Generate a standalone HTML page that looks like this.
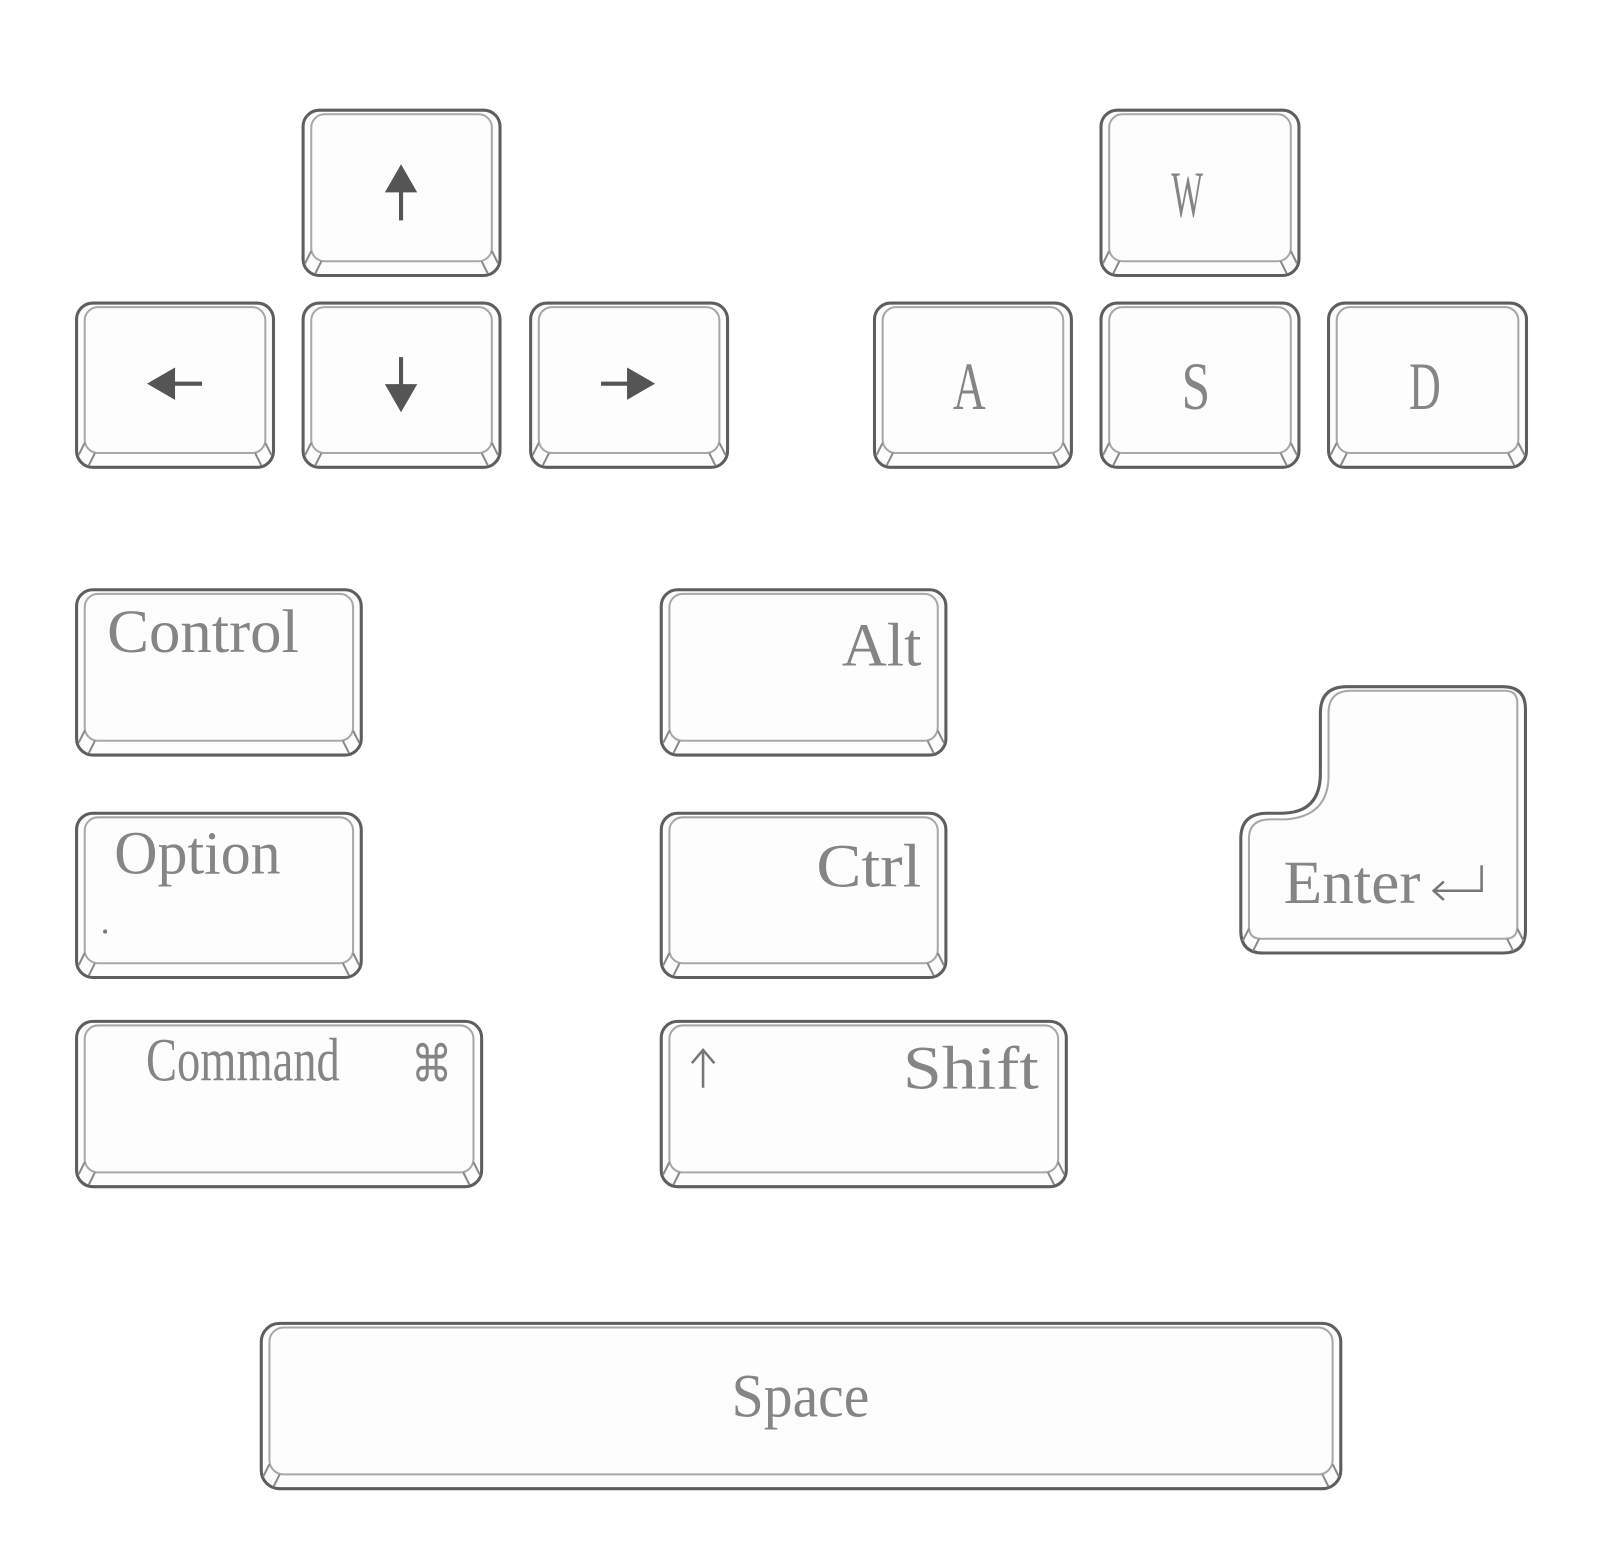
<!DOCTYPE html>
<html><head><meta charset="utf-8"><style>
html,body{margin:0;padding:0;background:#fff;}
svg{display:block}
.o{fill:#fdfdfd;stroke:#5e5e5e;stroke-width:3}
.i{fill:none;stroke:#a8a8a8;stroke-width:2}
.b{fill:none;stroke:#8a8a8a;stroke-width:2}
text{font-family:"Liberation Serif",serif;fill:#858585}
.a{fill:#555;stroke:#555}
</style></head><body>
<svg width="1600" height="1554" viewBox="0 0 1568 1523">
<rect class="o" x="297" y="108" width="193" height="162" rx="16"/><rect class="i" x="305" y="112" width="177" height="144" rx="13"/>
<path class="b" d="M305 246 L299 258 M315 256 L309 268 M482 246 L488 258 M472 256 L478 268"/>
<rect class="o" x="75" y="297" width="193" height="161" rx="16"/><rect class="i" x="83" y="301" width="177" height="143" rx="13"/>
<path class="b" d="M83 434 L77 446 M93 444 L87 456 M260 434 L266 446 M250 444 L256 456"/>
<rect class="o" x="297" y="297" width="193" height="161" rx="16"/><rect class="i" x="305" y="301" width="177" height="143" rx="13"/>
<path class="b" d="M305 434 L299 446 M315 444 L309 456 M482 434 L488 446 M472 444 L478 456"/>
<rect class="o" x="520" y="297" width="193" height="161" rx="16"/><rect class="i" x="528" y="301" width="177" height="143" rx="13"/>
<path class="b" d="M528 434 L522 446 M538 444 L532 456 M705 434 L711 446 M695 444 L701 456"/>
<rect class="o" x="1079" y="108" width="194" height="162" rx="16"/><rect class="i" x="1087" y="112" width="178" height="144" rx="13"/>
<path class="b" d="M1087 246 L1081 258 M1097 256 L1091 268 M1265 246 L1271 258 M1255 256 L1261 268"/>
<rect class="o" x="857" y="297" width="193" height="161" rx="16"/><rect class="i" x="865" y="301" width="177" height="143" rx="13"/>
<path class="b" d="M865 434 L859 446 M875 444 L869 456 M1042 434 L1048 446 M1032 444 L1038 456"/>
<rect class="o" x="1079" y="297" width="194" height="161" rx="16"/><rect class="i" x="1087" y="301" width="178" height="143" rx="13"/>
<path class="b" d="M1087 434 L1081 446 M1097 444 L1091 456 M1265 434 L1271 446 M1255 444 L1261 456"/>
<rect class="o" x="1302" y="297" width="194" height="161" rx="16"/><rect class="i" x="1310" y="301" width="178" height="143" rx="13"/>
<path class="b" d="M1310 434 L1304 446 M1320 444 L1314 456 M1488 434 L1494 446 M1478 444 L1484 456"/>
<rect class="o" x="75" y="578" width="279" height="162" rx="16"/><rect class="i" x="83" y="582" width="263" height="144" rx="13"/>
<path class="b" d="M83 716 L77 728 M93 726 L87 738 M346 716 L352 728 M336 726 L342 738"/>
<rect class="o" x="648" y="578" width="279" height="162" rx="16"/><rect class="i" x="656" y="582" width="263" height="144" rx="13"/>
<path class="b" d="M656 716 L650 728 M666 726 L660 738 M919 716 L925 728 M909 726 L915 738"/>
<rect class="o" x="75" y="797" width="279" height="161" rx="16"/><rect class="i" x="83" y="801" width="263" height="143" rx="13"/>
<path class="b" d="M83 934 L77 946 M93 944 L87 956 M346 934 L352 946 M336 944 L342 956"/>
<rect class="o" x="648" y="797" width="279" height="161" rx="16"/><rect class="i" x="656" y="801" width="263" height="143" rx="13"/>
<path class="b" d="M656 934 L650 946 M666 944 L660 956 M919 934 L925 946 M909 944 L915 956"/>
<rect class="o" x="75" y="1001" width="397" height="162" rx="16"/><rect class="i" x="83" y="1005" width="381" height="144" rx="13"/>
<path class="b" d="M83 1139 L77 1151 M93 1149 L87 1161 M464 1139 L470 1151 M454 1149 L460 1161"/>
<rect class="o" x="648" y="1001" width="397" height="162" rx="16"/><rect class="i" x="656" y="1005" width="381" height="144" rx="13"/>
<path class="b" d="M656 1139 L650 1151 M666 1149 L660 1161 M1037 1139 L1043 1151 M1027 1149 L1033 1161"/>
<rect class="o" x="256" y="1297" width="1058" height="162" rx="18"/><rect class="i" x="264" y="1301" width="1042" height="144" rx="14"/>
<path class="b" d="M264 1435 L258 1447 M274 1445 L268 1457 M1306 1435 L1312 1447 M1296 1445 L1302 1457"/>
<path class="o" d="M1320 673 H1473 Q1495 673 1495 695 V912 Q1495 934 1473 934 H1238 Q1216 934 1216 912 V822 Q1216 797 1242 797 H1256 Q1294 797 1294 758 V699 Q1294 673 1320 673 Z"/>
<path class="i" d="M1324 677 H1475 Q1487 677 1487 689 V908 Q1487 920 1475 920 H1236 Q1224 920 1224 908 V822 Q1224 803 1245 803 H1260 Q1302 800 1302 760 V699 Q1302 677 1324 677 Z"/>
<path class="b" d="M1224 910 L1218 922 M1234 920 L1228 932 M1487 910 L1493 922 M1477 920 L1483 932"/>

<g class="a">
<path d="M393 162 L378 188 L408 188 Z" stroke-width="1"/><line x1="393" y1="186" x2="393" y2="216" stroke-width="4"/>
<path d="M145 376 L171 361 L171 391 Z" stroke-width="1"/><line x1="169" y1="376" x2="198" y2="376" stroke-width="4"/>
<path d="M393 403 L378 377 L408 377 Z" stroke-width="1"/><line x1="393" y1="350" x2="393" y2="379" stroke-width="4"/>
<path d="M641 376 L615 361 L615 391 Z" stroke-width="1"/><line x1="589" y1="376" x2="617" y2="376" stroke-width="4"/>
</g>

<text x="1148" y="212" font-size="64" textLength="31" lengthAdjust="spacingAndGlyphs">W</text>
<text x="934" y="401" font-size="66" textLength="32" lengthAdjust="spacingAndGlyphs">A</text>
<text x="1158" y="401" font-size="66" textLength="28" lengthAdjust="spacingAndGlyphs">S</text>
<text x="1381" y="401" font-size="66" textLength="31" lengthAdjust="spacingAndGlyphs">D</text>

<text x="105" y="639" font-size="60" textLength="188" lengthAdjust="spacingAndGlyphs">Control</text>
<text x="825" y="652" font-size="60" textLength="78" lengthAdjust="spacingAndGlyphs">Alt</text>
<text x="112" y="856" font-size="60" textLength="163" lengthAdjust="spacingAndGlyphs">Option</text>
<circle cx="103" cy="913" r="2" fill="#777"/>
<text x="800" y="869" font-size="60" textLength="103" lengthAdjust="spacingAndGlyphs">Ctrl</text>
<text x="143" y="1059" font-size="60" textLength="190" lengthAdjust="spacingAndGlyphs">Command</text>
<text x="403" y="1060" font-size="50" font-family="DejaVu Sans" textLength="40" lengthAdjust="spacingAndGlyphs">⌘</text>
<path d="M689 1066 V1030 M678 1042 L689 1029 L700 1042" fill="none" stroke="#777" stroke-width="2.5"/>
<text x="885" y="1067" font-size="60" textLength="133" lengthAdjust="spacingAndGlyphs">Shift</text>
<text x="1258" y="885" font-size="60" textLength="134" lengthAdjust="spacingAndGlyphs">Enter</text>
<path d="M1452 848 V873 H1405 M1415 864 L1405 873 L1415 882" fill="none" stroke="#777" stroke-width="2.5"/>
<text x="717" y="1388" font-size="60" textLength="135" lengthAdjust="spacingAndGlyphs">Space</text>
</svg>
</body></html>
